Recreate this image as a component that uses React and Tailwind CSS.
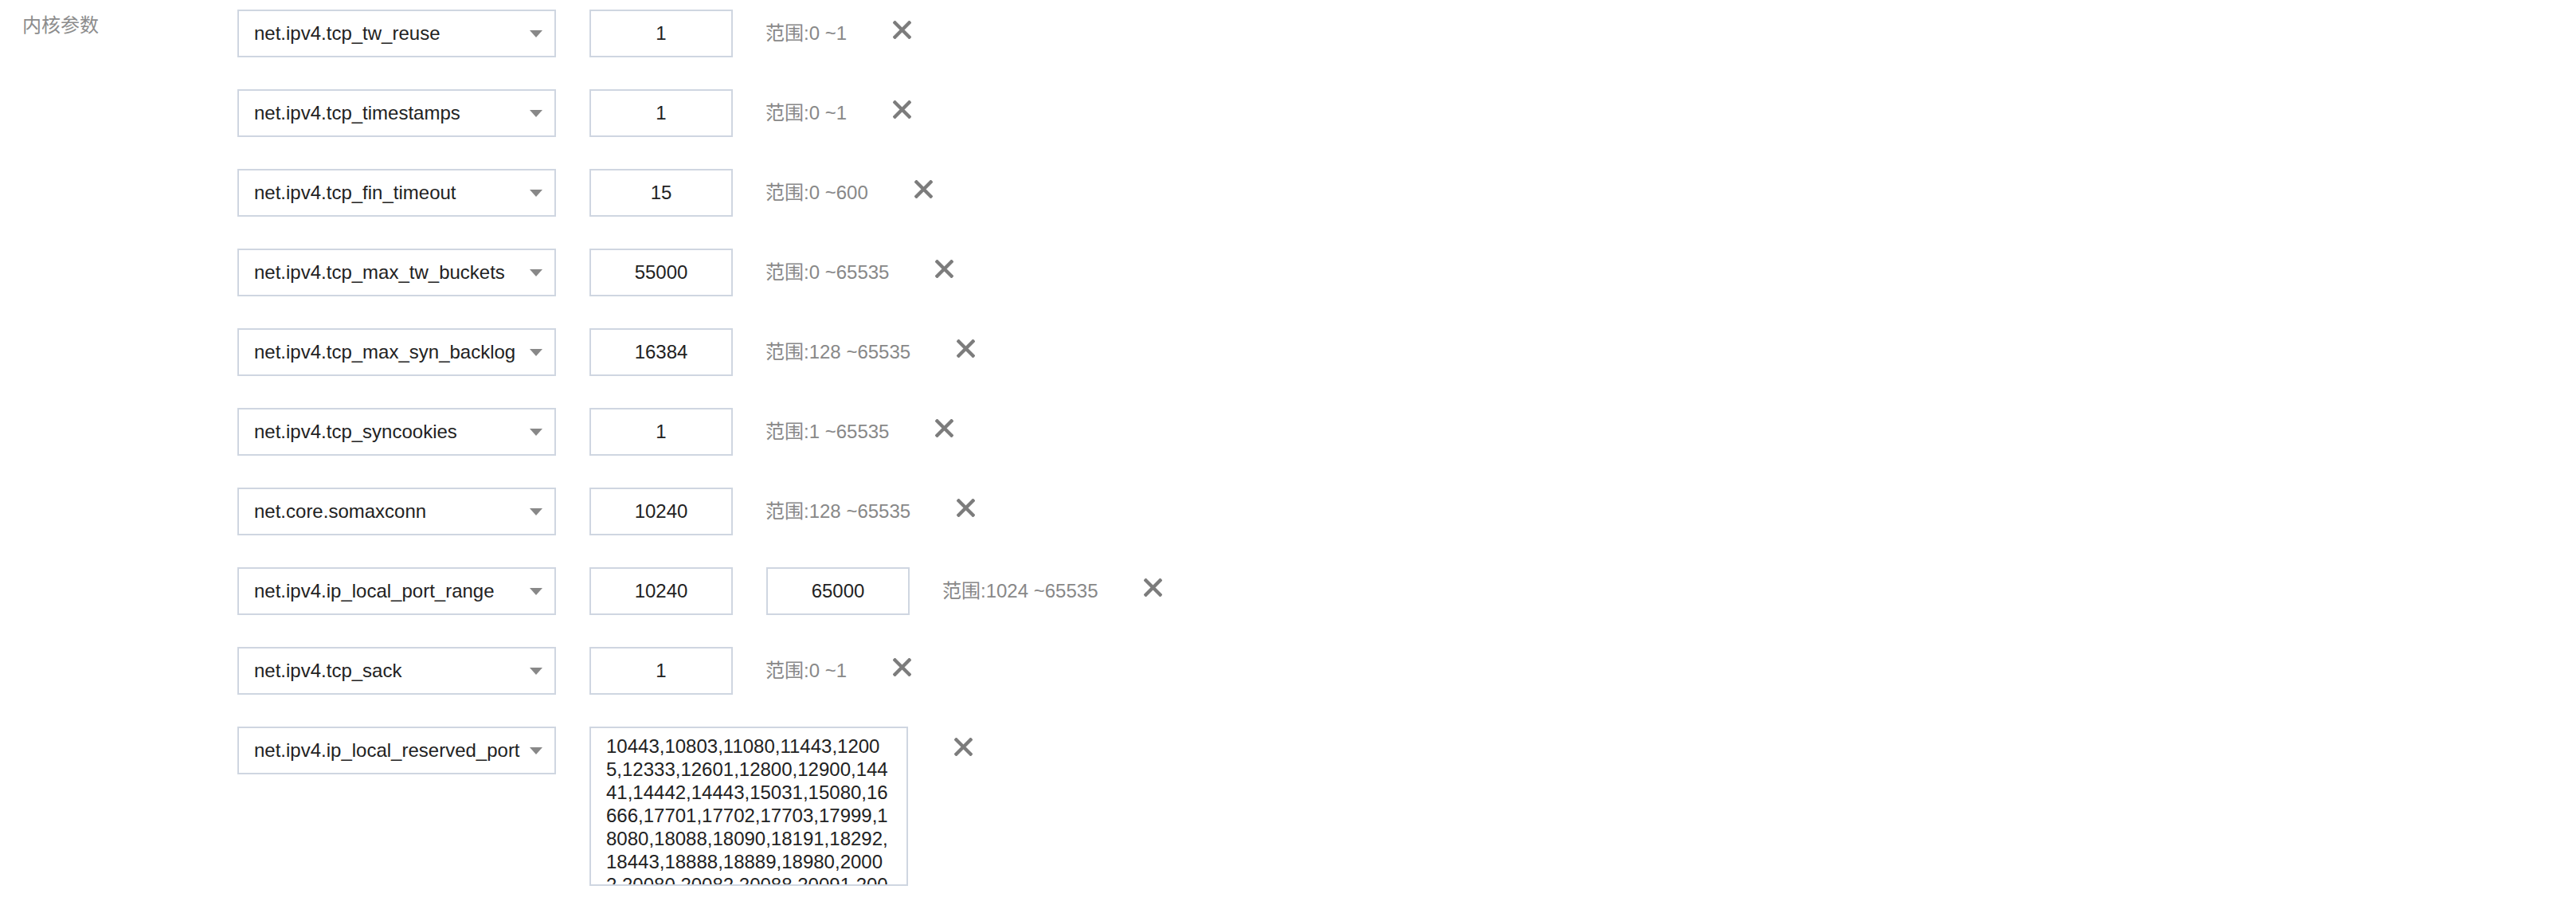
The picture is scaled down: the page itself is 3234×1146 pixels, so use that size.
import React from 'react';

const rows = [
  { name: 'net.ipv4.tcp_tw_reuse', values: ['1'], range: '范围:0 ~1' },
  { name: 'net.ipv4.tcp_timestamps', values: ['1'], range: '范围:0 ~1' },
  { name: 'net.ipv4.tcp_fin_timeout', values: ['15'], range: '范围:0 ~600' },
  { name: 'net.ipv4.tcp_max_tw_buckets', values: ['55000'], range: '范围:0 ~65535' },
  { name: 'net.ipv4.tcp_max_syn_backlog', values: ['16384'], range: '范围:128 ~65535' },
  { name: 'net.ipv4.tcp_syncookies', values: ['1'], range: '范围:1 ~65535' },
  { name: 'net.core.somaxconn', values: ['10240'], range: '范围:128 ~65535' },
  { name: 'net.ipv4.ip_local_port_range', values: ['10240', '65000'], range: '范围:1024 ~65535' },
  { name: 'net.ipv4.tcp_sack', values: ['1'], range: '范围:0 ~1' },
];

const reservedPorts =
  '10443,10803,11080,11443,12005,12333,12601,12800,12900,14441,14442,14443,15031,15080,16666,17701,17702,17703,17999,18080,18088,18090,18191,18292,18443,18888,18889,18980,20002,20080,20082,20088,20091,20092,20443,21080';

const Select = ({ name }) => (
  <div className="w-[400px] h-[60px] shrink-0 border-2 border-[#cfd6e1] bg-white flex items-center justify-between pl-[19px] pr-[15px] text-[#222]">
    <span className="whitespace-nowrap">{name}</span>
    <svg width="16" height="9" viewBox="0 0 16 9" className="shrink-0">
      <polygon points="0,0 16,0 8,9" fill="#888" />
    </svg>
  </div>
);

const ValueInput = ({ value }) => (
  <div className="ml-[42px] w-[180px] h-[60px] shrink-0 border-2 border-[#cfd6e1] flex items-center justify-center text-[#222]">
    {value}
  </div>
);

const RemoveIcon = () => (
  <button className="ml-[58px] mt-[14px] w-[23px] h-[23px] shrink-0 flex items-center justify-center">
    <svg width="23" height="23" viewBox="0 0 23 23">
      <path d="M2.5 2.5 L20.5 20.5 M20.5 2.5 L2.5 20.5" stroke="#7c7c7c" strokeWidth="4.4" strokeLinecap="square" />
    </svg>
  </button>
);

export default function App() {
  return (
    <div
      className="min-h-screen bg-white flex items-start pl-[28px] pt-[12px] text-[24px]"
      style={{ fontFamily: '"Liberation Sans", "Noto Sans CJK SC", sans-serif' }}
    >
      <div className="w-[270px] shrink-0 mt-[2px] leading-[36px] text-[#8c8c8c]">内核参数</div>
      <div className="flex flex-col gap-[40px]">
        {rows.map((row) => (
          <div key={row.name} className="flex items-start">
            <Select name={row.name} />
            {row.values.map((v, i) => (
              <ValueInput key={i} value={v} />
            ))}
            <div className="ml-[41px] h-[60px] flex items-center whitespace-nowrap text-[#888]">
              {row.range}
            </div>
            <RemoveIcon />
          </div>
        ))}
        <div className="flex items-start">
          <Select name="net.ipv4.ip_local_reserved_port" />
          <div className="ml-[42px] w-[400px] h-[200px] shrink-0 border-2 border-[#cfd6e1] overflow-hidden pl-[19px] pt-[8px] text-[#222]">
            <div className="w-[356px] break-all leading-[29px]">{reservedPorts}</div>
          </div>
          <RemoveIcon />
        </div>
      </div>
    </div>
  );
}
